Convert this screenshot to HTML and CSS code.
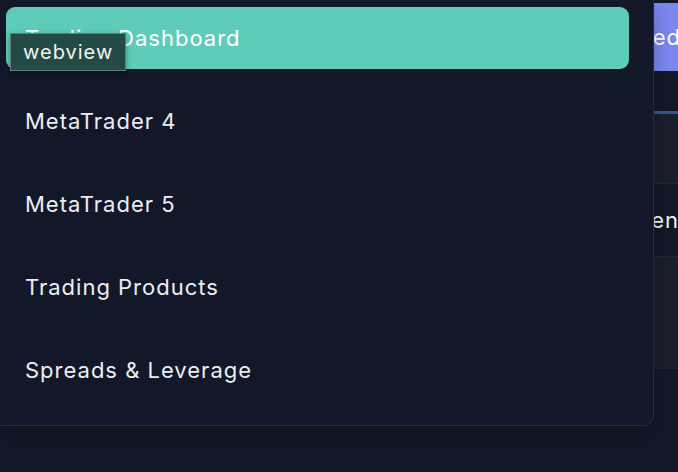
FILE: index.html
```html
<!DOCTYPE html>
<html>
<head>
<meta charset="utf-8">
<link rel="stylesheet" href="styles.css">
</head>
<body>
<div class="page">
  <div class="content">
    <div class="toolbar">
      <button class="primary">Connected</button>
    </div>
    <div class="table">
      <div class="row alt"><span class="cell">Account</span></div>
      <div class="row open"><span class="cell">Open</span></div>
      <div class="row alt tall"><span class="cell">Pending</span></div>
    </div>
  </div>

  <nav class="menu">
    <a class="item active">Trading Dashboard</a>
    <a class="item">MetaTrader 4</a>
    <a class="item">MetaTrader 5</a>
    <a class="item">Trading Products</a>
    <a class="item">Spreads &amp; Leverage</a>
  </nav>

  <div class="tooltip">webview</div>
</div>
</body>
</html>
```
FILE: styles.css
```css
html, body {
  margin: 0;
  padding: 0;
  background: #111827;
  font-family: Inter, "Noto Sans", sans-serif;
  color: #f3f4f6;
  overflow: hidden;
}

.page {
  position: relative;
  width: 678px;
  height: 472px;
  overflow: hidden;
}

.content {
  padding-left: 540px;
  padding-top: 3px;
  overflow: hidden;
}

.toolbar {
  height: 108px;
  border-bottom: 3px solid #35578f;
  display: flex;
  align-items: flex-start;
}

.primary {
  height: 68px;
  width: 300px;
  flex: none;
  border: none;
  border-radius: 8px;
  background: #7c87f0;
  color: #ffffff;
  font-family: Inter, "Noto Sans", sans-serif;
  font-size: 22px;
  letter-spacing: 1px;
  text-align: left;
  padding: 0 0 0 18px;
}

.table {
  display: flex;
  flex-direction: column;
}

.row {
  height: 72px;
  display: flex;
  align-items: center;
  border-bottom: 1px solid #1f2735;
  background: #111827;
  font-size: 22px;
  letter-spacing: 1px;
  padding-left: 18px;
  white-space: nowrap;
}

.row.alt {
  background: #1a1f2c;
  height: 69px;
}

.row.tall {
  height: 111px;
}

.row.open {
  padding-left: 79px;
}

.cell {
  color: #f3f4f6;
}

.menu {
  position: absolute;
  left: -1px;
  top: -1px;
  width: 655px;
  height: 427px;
  box-sizing: border-box;
  border: 1px solid #252d3c;
  border-radius: 0 0 10px 0;
  background: #121829;
  padding: 7px 24px 0 6px;
  display: flex;
  flex-direction: column;
  gap: 21px;
  box-shadow: 0 8px 20px rgba(0, 0, 0, 0.25);
}

.item {
  display: flex;
  align-items: center;
  height: 62px;
  flex: none;
  padding-left: 19px;
  border-radius: 9px;
  font-size: 22px;
  letter-spacing: 1px;
  color: #eceef2;
}

.item.active {
  background: #5fcbbb;
  color: #ffffff;
}

.tooltip {
  position: absolute;
  left: 10px;
  top: 33px;
  width: 116px;
  height: 38px;
  box-sizing: border-box;
  background: #234a44;
  border: 1px solid #5d7f78;
  color: #f2f4f3;
  font-size: 20px;
  letter-spacing: 1px;
  display: flex;
  align-items: center;
  padding-left: 12px;
  box-shadow: 0 2px 6px rgba(0, 0, 0, 0.3);
}
```
